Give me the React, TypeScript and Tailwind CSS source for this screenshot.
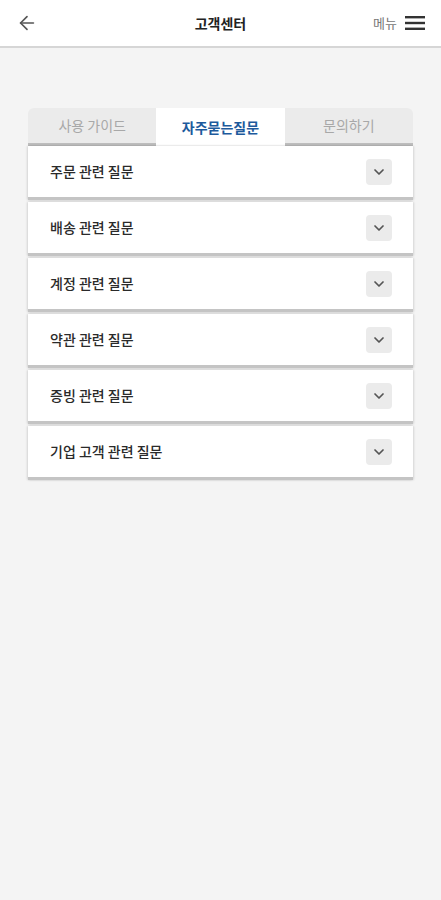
import { ArrowLeft, ChevronDown } from "lucide-react";

const tabs = ["사용 가이드", "자주묻는질문", "문의하기"];
const items = [
  "주문 관련 질문",
  "배송 관련 질문",
  "계정 관련 질문",
  "약관 관련 질문",
  "증빙 관련 질문",
  "기업 고객 관련 질문",
];

export default function App() {
  return (
    <div
      className="min-h-[900px] bg-[#f4f4f4] text-[#333]"
      style={{ fontFamily: '"Noto Sans CJK KR", "Noto Sans", sans-serif' }}
    >
      <header className="flex h-12 items-center justify-between border-b-2 border-[#d6d6d6] bg-white px-4">
        <ArrowLeft size={22} strokeWidth={1.8} className="text-[#555]" />
        <div className="absolute left-1/2 -translate-x-1/2 text-[14px] font-bold text-[#222]">
          고객센터
        </div>
        <div className="flex items-center gap-2">
          <span className="text-[13px] text-[#777]">메뉴</span>
          <svg width="20" height="16" viewBox="0 0 20 16" className="text-[#333]">
            <rect x="0" y="1" width="20" height="2.4" fill="currentColor" />
            <rect x="0" y="6.8" width="20" height="2.4" fill="currentColor" />
            <rect x="0" y="12.6" width="20" height="2.4" fill="currentColor" />
          </svg>
        </div>
      </header>

      <main className="px-[28px] pt-[60px]">
        <div className="grid grid-cols-3">
          {tabs.map((t, i) =>
            i === 1 ? (
              <div
                key={t}
                className="flex h-[38px] items-center justify-center bg-white text-[14px] font-bold text-[#1d5a9c]"
              >
                {t}
              </div>
            ) : (
              <div
                key={t}
                className={`flex h-[38px] items-center justify-center border-b-[3px] border-[#bdbdbd] bg-[#ebebeb] pb-px text-[14px] text-[#a8a8a8] ${
                  i === 0 ? "rounded-tl-md" : "rounded-tr-md"
                }`}
              >
                {t}
              </div>
            )
          )}
        </div>

        <div className="flex flex-col gap-[2px]">
          {items.map((q) => (
            <div
              key={q}
              className="flex h-[54px] items-center justify-between border-b-[3px] border-[#c4c4c4] bg-white pl-[22px] pr-[21px] shadow-[1px_0_2px_rgba(0,0,0,0.12),-1px_0_2px_rgba(0,0,0,0.12)]"
            >
              <span className="text-[14px] font-medium text-[#2a2a2a]">{q}</span>
              <div className="flex h-[26px] w-[26px] items-center justify-center rounded bg-[#ebebeb]">
                <ChevronDown size={16} strokeWidth={2.6} className="text-[#555]" />
              </div>
            </div>
          ))}
        </div>
      </main>
    </div>
  );
}
